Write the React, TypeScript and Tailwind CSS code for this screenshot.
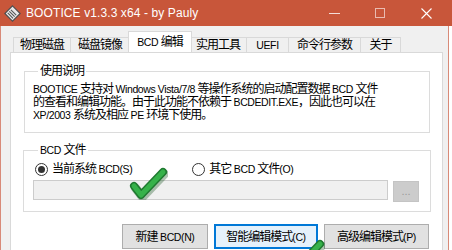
import React from 'react'

const ui = { fontFamily: '"Liberation Sans", "Noto Sans CJK SC", sans-serif' }

// latin runs in the dialog font are narrower than the CJK glyphs
function L({ children }: { children: React.ReactNode }) {
	return <span className="text-[10.5px] tracking-[-0.4px]">{children}</span>
}

function Tab({ label, w, active }: { label: React.ReactNode; w: string; active?: boolean }) {
	if (active) {
		return (
			<div className={`${w} h-[21px] -mx-[2px] relative z-10 bg-white border border-b-0 border-[#d9d9d9] flex items-center justify-center text-[12px] text-black`}>
				<span>{label}</span>
			</div>
		)
	}
	return (
		<div className={`${w} h-[15px] bg-[#f0f0f0] border border-b-0 border-[#d9d9d9] -ml-px first:ml-0 flex items-center justify-center text-[12px] text-black`}>
			<span>{label}</span>
		</div>
	)
}

function Radio({ checked, label }: { checked?: boolean; label: React.ReactNode }) {
	return (
		<div className="flex items-center gap-[4px]">
			<span className="w-[13px] h-[13px] rounded-full border border-[#333] bg-white flex items-center justify-center">
				{checked && <span className="w-[7px] h-[7px] rounded-full bg-[#333]" />}
			</span>
			<span className="text-[12px] leading-[14px] whitespace-nowrap">{label}</span>
		</div>
	)
}

function Check({ className }: { className: string }) {
	return (
		<svg className={className} viewBox="0 0 40 34" fill="none">
			<path d="M6 20 L13 29 L35 6" stroke="#1c5a26" strokeWidth="9" strokeLinecap="round" strokeLinejoin="round" opacity="0.35" transform="translate(1.5 2)" />
			<path d="M6 20 L13 29 L35 6" stroke="#1f7a30" strokeWidth="8" strokeLinecap="round" strokeLinejoin="round" />
			<path d="M6 20 L13 29 L35 6" stroke="#36b24a" strokeWidth="5" strokeLinecap="round" strokeLinejoin="round" />
		</svg>
	)
}

export default function App() {
	return (
		<div className="w-[452px] h-[250px] overflow-hidden bg-white relative" style={ui}>
			{/* title bar */}
			<div className="h-[26px] bg-[#c8563a] flex items-center text-white">
				<svg className="ml-[4px] w-[17px] h-[17px]" viewBox="0 0 16 16">
					<path d="M8 0.8 L15.2 8 L8 15.2 L0.8 8 Z" fill="#e9e9e9" stroke="#4a4a4a" strokeWidth="1" />
					<path d="M5 6 L10 11 M6.5 4.5 L11.5 9.5 M3.5 7.5 L8.5 12.5" stroke="#555" strokeWidth="1" />
				</svg>
				<span className="ml-[5px] text-[12px] tracking-[0.1px]">BOOTICE v1.3.3 x64 - by Pauly</span>
				<div className="ml-auto flex items-center h-full">
					<div className="w-[46px] h-full flex items-center justify-center">
						<span className="w-[11px] h-px bg-white/80" />
					</div>
					<div className="w-[46px] h-full flex items-center justify-center">
						<span className="w-[10px] h-[10px] border border-white/60" />
					</div>
					<div className="w-[46px] h-full flex items-center justify-center mr-[3px]">
						<svg className="w-[11px] h-[11px]" viewBox="0 0 11 11">
							<path d="M0.5 0.5 L10.5 10.5 M10.5 0.5 L0.5 10.5" stroke="white" strokeWidth="1.1" />
						</svg>
					</div>
				</div>
			</div>

			{/* window body */}
			<div className="w-[449px] h-[224px] bg-[#f0f0f0] border-l border-r border-[#d88a78] pl-[9px] pr-[5px] pt-[6px] tracking-[-1px]">
				{/* tab strip */}
				<div className="flex items-end h-[20px] pl-[3px]">
					<Tab label="物理磁盘" w="w-[58px]" />
					<Tab label="磁盘镜像" w="w-[60px]" />
					<Tab label={<><L>BCD </L>编辑</>} w="w-[64px]" active />
					<Tab label="实用工具" w="w-[58px]" />
					<Tab label={<L>UEFI</L>} w="w-[43px]" />
					<Tab label="命令行参数" w="w-[73px]" />
					<Tab label="关于" w="w-[41px]" />
				</div>

				{/* tab page */}
				<div className="h-[210px] bg-white border border-[#d9d9d9] pt-[12px] pl-[13px] pr-[12px] text-black">
					<fieldset className="border border-[#dcdcdc] pl-[8px] pr-[6px] pb-[10px] pt-[5px]">
						<legend className="ml-[5px] px-[2px] text-[12px] leading-[13px]">使用说明</legend>
						<p className="text-[12px] leading-[13px] whitespace-nowrap">
							<L>BOOTICE </L>支持对<L> Windows Vista/7/8 </L>等操作系统的启动配置数据<L> BCD </L>文件<br />
							的查看和编辑功能。由于此功能不依赖于<L> BCDEDIT.EXE</L>，因此也可以在<br />
							<L>XP/2003 </L>系统及相应<L> PE </L>环境下使用。
						</p>
					</fieldset>

					<fieldset className="mt-[11px] -ml-px border border-[#dcdcdc] pl-[9px] pr-[11px] pb-[9px] pt-[5px]">
						<legend className="ml-[5px] px-[2px] text-[12px] leading-[13px]"><L>BCD </L>文件</legend>
						<div className="flex items-center h-[14px] pl-[2px]">
							<Radio checked label={<>当前系统<L> BCD(S)</L></>} />
							<div className="ml-[60px]">
								<Radio label={<>其它<L> BCD </L>文件<L>(O)</L></>} />
							</div>
						</div>
						<div className="flex items-start mt-[4px]">
							<div className="w-[355px] h-[20px] bg-[#f0f0f0] border border-[#cccccc]" />
							<div className="ml-[5px] mt-px w-[26px] h-[21px] bg-[#cccccc] border border-[#c4c4c4] flex items-center justify-center text-[11px] text-[#9a9a9a] leading-none tracking-normal">
								...
							</div>
						</div>
					</fieldset>

					<div className="flex justify-end gap-[6px] mt-[12px] pr-[1px]">
						<button className="w-[86px] h-[25px] bg-[#e1e1e1] border border-[#adadad] text-[12px]">新建<L> BCD(N)</L></button>
						<button className="w-[104px] h-[25px] bg-[#e5f1fb] border-2 border-[#0078d7] text-[12px]">智能编辑模式<L>(C)</L></button>
						<button className="w-[105px] h-[25px] bg-[#e1e1e1] border border-[#adadad] text-[12px]">高级编辑模式<L>(P)</L></button>
					</div>
				</div>
			</div>

			{/* green check annotations */}
			<Check className="absolute left-[128px] top-[166px] w-[40px] h-[34px]" />
			<Check className="absolute left-[285px] top-[238px] w-[40px] h-[34px]" />
		</div>
	)
}
